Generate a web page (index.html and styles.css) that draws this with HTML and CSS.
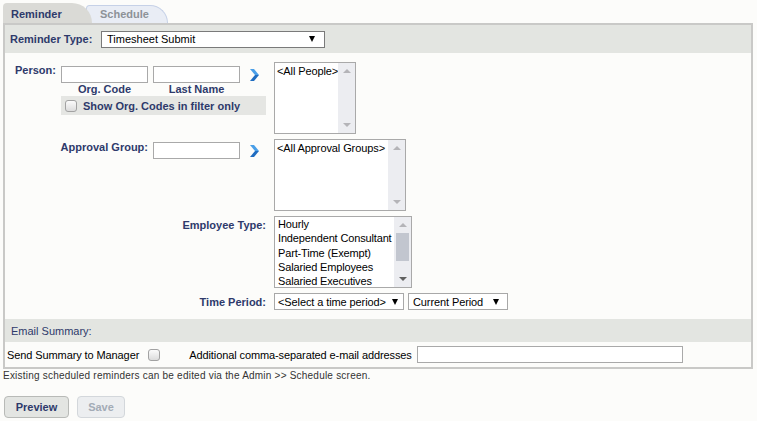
FILE: index.html
```html
<!DOCTYPE html>
<html>
<head>
<meta charset="utf-8">
<link rel="stylesheet" href="styles.css">
</head>
<body>
<div class="page">
  <div class="tabs">
    <div class="tab active">Reminder</div>
    <div class="tab inactive">Schedule</div>
  </div>
  <div class="panel">
    <div class="bar type-bar">
      <span class="lbl">Reminder Type:</span>
      <div class="select sel-type"><span>Timesheet Submit</span><i class="caret"></i></div>
    </div>
    <div class="form">
      <div class="row">
        <div class="left person">
          <span class="lbl person-lbl">Person:</span>
          <div class="person-block">
            <div class="inputs">
              <div class="input"></div>
              <div class="input"></div>
              <svg class="chev" viewBox="0 0 9 12" width="9" height="12"><polygon points="0,0 4,0 9,6 5,6" fill="#4a9fe8"/><polygon points="5,6 9,6 4,12 0,12" fill="#1f6cc0"/></svg>
            </div>
            <div class="sublabels"><span>Org. Code</span><span>Last Name</span></div>
            <div class="filterbox"><span class="cb"></span><span class="lbl">Show Org. Codes in filter only</span></div>
          </div>
        </div>
        <div class="listbox lb-people">
          <div class="items"><div>&lt;All People&gt;</div></div>
          <div class="sb"><i class="up"></i><i class="down"></i></div>
        </div>
      </div>
      <div class="row">
        <div class="left approval">
          <span class="lbl ag-lbl">Approval Group:</span>
          <div class="input"></div>
          <svg class="chev" viewBox="0 0 9 12" width="9" height="12"><polygon points="0,0 4,0 9,6 5,6" fill="#4a9fe8"/><polygon points="5,6 9,6 4,12 0,12" fill="#1f6cc0"/></svg>
        </div>
        <div class="listbox lb-groups">
          <div class="items"><div>&lt;All Approval Groups&gt;</div></div>
          <div class="sb"><i class="up"></i><i class="down"></i></div>
        </div>
      </div>
      <div class="row">
        <div class="left rlabel"><span class="lbl et-lbl">Employee Type:</span></div>
        <div class="listbox lb-types">
          <div class="items list">
            <div>Hourly</div>
            <div>Independent Consultant</div>
            <div>Part-Time (Exempt)</div>
            <div>Salaried Employees</div>
            <div>Salaried Executives</div>
          </div>
          <div class="sb"><i class="up"></i><span class="thumb"></span><i class="down dark"></i></div>
        </div>
      </div>
      <div class="row center">
        <div class="left rlabel"><span class="lbl">Time Period:</span></div>
        <div class="select sel-period"><span>&lt;Select a time period&gt;</span><i class="caret"></i></div>
        <div class="select sel-current"><span>Current Period</span><i class="caret"></i></div>
      </div>
    </div>
    <div class="bar email-bar"><span class="email-title">Email Summary:</span></div>
    <div class="email-row">
      <span>Send Summary to Manager</span>
      <span class="cb"></span>
      <span class="addl">Additional comma-separated e-mail addresses</span>
      <div class="input email-input"></div>
    </div>
  </div>
  <p class="note">Existing scheduled reminders can be edited via the Admin &gt;&gt; Schedule screen.</p>
  <div class="buttons">
    <button class="btn preview">Preview</button>
    <button class="btn save">Save</button>
  </div>
</div>
</body>
</html>
```

FILE: styles.css
```css
* { box-sizing: border-box; }
html, body { margin: 0; padding: 0; background: #fcfcfa; }
body { font-family: "Liberation Sans", Arial, sans-serif; font-size: 11px; color: #000; }
.page { padding: 3px 0 0 3px; width: 753px; }

.tabs { display: flex; height: 20px; align-items: flex-end; position: relative; z-index: 1; }
.tab { font-weight: bold; font-size: 11px; }
.tab.active { width: 89px; height: 20px; background: #dadad6; border-radius: 4px 20px 0 0; color: #2e3a6b; padding: 3px 0 0 8px; line-height: 17px; position: relative; z-index: 2; }
.tab.inactive { width: 82px; height: 18px; margin-left: -6px; background: #e9edf5; border: 1px solid #c6d1e7; border-bottom: none; border-radius: 4px 20px 0 0; color: #8d9298; padding: 1px 0 0 13px; line-height: 15px; }

.panel { border: 2px solid #c9c9c7; width: 750px; }
.bar { background: #e3e5e1; display: flex; align-items: center; }
.type-bar { height: 28px; padding-left: 5px; }
.lbl { font-weight: bold; color: #2e3a6b; }
.type-bar .lbl { width: 91px; }

.select { height: 17px; border: 1px solid #a8a8a8; background: #fff; display: flex; align-items: center; padding: 0 5px 0 3px; justify-content: space-between; white-space: nowrap; letter-spacing: -0.1px; }
.sel-type { width: 224px; border-color: #7a7a7a; padding-left: 5px; padding-right: 9px; letter-spacing: 0; }
.caret { display: inline-block; width: 0; height: 0; border-left: 3.5px solid transparent; border-right: 3.5px solid transparent; border-top: 6px solid #000; flex: none; }

.form { padding: 9px 0 9px 0; display: flex; flex-direction: column; gap: 5px; }
.row { display: flex; align-items: flex-start; }
.row.center { align-items: center; }
.left { width: 269px; flex: none; display: flex; align-items: flex-start; }

.person { padding-left: 10px; }
.person-lbl { width: 46px; margin-top: 1px; line-height: 14px; }
.person-block { width: 205px; padding-top: 4px; }
.inputs { display: flex; align-items: center; }
.input { width: 87px; height: 17px; border: 1px solid #a9a9a9; background: #fff; flex: none; }
.inputs .input + .input { margin-left: 5px; }
.chev { margin-left: 10px; flex: none; display: block; }
.sublabels { display: flex; height: 12px; line-height: 12px; font-weight: bold; color: #2e3a6b; }
.sublabels span { width: 87px; text-align: center; }
.sublabels span + span { margin-left: 5px; }
.filterbox { margin-top: 1px; height: 19px; background: #e5e6e3; display: flex; align-items: center; padding-left: 4px; }
.filterbox .lbl { margin-left: 6px; }
.cb { display: inline-block; width: 12px; height: 12px; border: 1px solid #a2a2a2; border-radius: 3px; background: linear-gradient(#fbfbfb, #dcdcdc); flex: none; }

.approval { padding-top: 3px; }
.ag-lbl { width: 143px; text-align: right; margin-right: 5px; line-height: 11px; }
.approval .chev { margin-top: 3px; }

.rlabel { justify-content: flex-end; padding-right: 8px; }
.et-lbl { margin-top: 2px; line-height: 14px; }

.listbox { height: 72px; border: 1px solid #a9a9a9; background: #fff; display: flex; flex: none; }
.lb-people { width: 82px; }
.lb-groups { width: 132px; }
.lb-types { width: 138px; }
.items { flex: 1; padding: 1px 0 0 2px; line-height: 14px; white-space: nowrap; overflow: hidden; letter-spacing: -0.1px; }
.items.list { padding: 0 0 0 3px; line-height: 14.3px; letter-spacing: -0.15px; }
.sb { width: 17px; flex: none; background: #ecedf1; display: flex; flex-direction: column; align-items: center; justify-content: space-between; padding: 6px 0 6px; }
.sb .up, .sb .down { display: block; width: 0; height: 0; border-left: 4px solid transparent; border-right: 4px solid transparent; }
.sb .up { border-bottom: 4px solid #b4b4b8; }
.sb .down { border-top: 4px solid #b4b4b8; }
.sb .down.dark { border-top-color: #606060; }
.lb-types .sb { justify-content: flex-start; }
.lb-types .thumb { display: block; width: 13px; height: 28px; background: #c2c6cf; margin-top: 6px; margin-bottom: auto; }

.sel-period { width: 130px; }
.sel-current { width: 100px; margin-left: 4px; padding-left: 4px; padding-right: 8px; }

.email-bar { height: 23px; padding-left: 6px; }
.email-title { color: #2e3a6b; font-size: 11px; }
.email-row { height: 25px; display: flex; align-items: center; padding-left: 2px; letter-spacing: -0.1px; }
.email-row .cb { margin-left: 9px; }
.addl { margin-left: 29px; }
.email-input { width: 266px; margin-left: 5px; }

.note { margin: 1px 0 0 0; font-size: 10px; letter-spacing: 0.22px; color: #333; line-height: 12px; }
.buttons { display: flex; gap: 8px; margin-top: 14px; padding-left: 1px; }
.btn { font-family: inherit; font-size: 11px; font-weight: bold; height: 22px; border-radius: 4px; padding: 0; }
.preview { width: 65px; background: #e3e5e2; border: 1px solid #b8bab7; color: #2e3a6b; }
.save { width: 48px; background: #eceef0; border: 1px solid #d3d7db; color: #a3abb6; }
```
